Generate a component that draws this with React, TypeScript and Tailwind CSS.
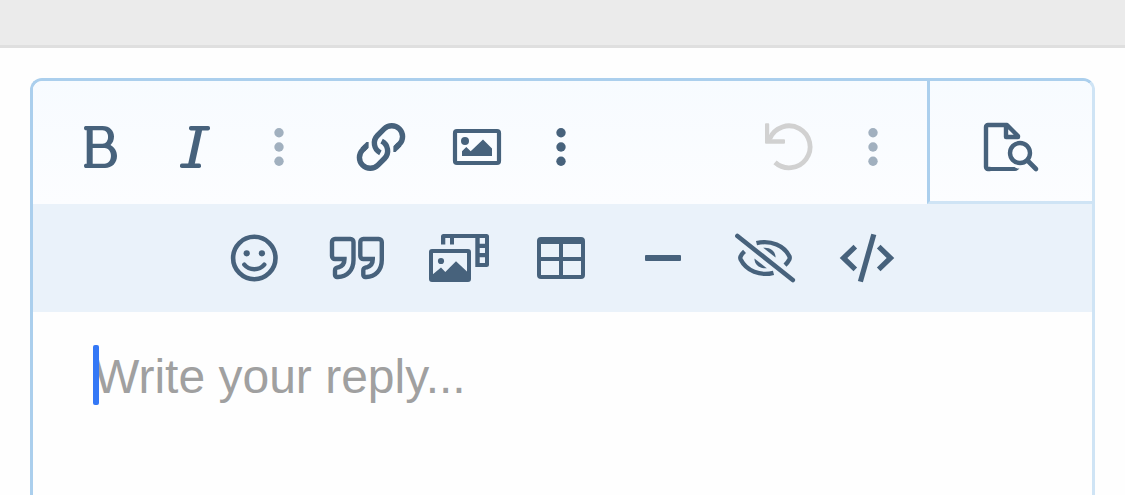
import type { ReactNode } from "react";

type GlyphProps = { children: ReactNode };

function Glyph({ children }: GlyphProps) {
  return (
    <svg viewBox="-36 -36 72 72" className="size-[72px] shrink-0" fill="currentColor" aria-hidden="true">
      {children}
    </svg>
  );
}

function Line({ d, width = 4, round = false }: { d: string; width?: number; round?: boolean }) {
  return (
    <path
      d={d}
      fill="none"
      stroke="currentColor"
      strokeWidth={width}
      strokeLinecap={round ? "round" : "butt"}
      strokeLinejoin={round ? "round" : "miter"}
    />
  );
}

const BoldIcon = () => (
  <Glyph>
    <path
      fillRule="evenodd"
      d="M-13.5 -21H3.5C11 -21 15 -16 15 -10.5C15 -6.8 13.7 -4 11.5 -2C15.5 0.3 18 4 18 9C18 16 13 21 6 21H-13.5C-15.5 21-15.5 16.8-13.5 16.8H-12.3V-16.8H-13.5C-15.5-16.8-15.5-21-13.5-21ZM-6.3-16.8V-3.3H3.5C11-3.3 11-16.8 3.5-16.8ZM-6.3 1V16.8H5.5C14.2 16.8 14.2 1 5.5 1Z"
    />
  </Glyph>
);

const ItalicIcon = () => (
  <Glyph>
    <rect x="-6" y="-21" width="21" height="4.4" rx="1.8" />
    <rect x="-15" y="16.6" width="21" height="4.4" rx="1.8" />
    <path d="M1-19H7.6L-.7 19H-7.3Z" />
  </Glyph>
);

const DotsIcon = () => (
  <Glyph>
    <circle cy="-14.3" r="4.7" />
    <circle r="4.7" />
    <circle cy="14.3" r="4.7" />
  </Glyph>
);

const LinkIcon = () => (
  <Glyph>
    <path d="M12.4-.8V4.9H14.6L20.3-.8L16.3-4.7Z" />
    <path d="M-12.4.8V-4.9H-14.6L-20.3.8L-16.3 4.7Z" />
    <Line width={5.4} d="M15 .6L18.4-2.8A10.8 10.8 0 0 0 3.1-18.1L-3.5-11.5A10.8 10.8 0 0 0-.6 5.8" />
    <Line width={5.4} d="M-15-.6L-18.4 2.8A10.8 10.8 0 0 0-3.1 18.1L3.5 11.5A10.8 10.8 0 0 0 .6-5.8" />
  </Glyph>
);

const ImageIcon = () => (
  <Glyph>
    <rect x="-22" y="-16" width="44" height="32" rx="2" fill="none" stroke="currentColor" strokeWidth="4.2" />
    <circle cx="-12" cy="-6" r="4" />
    <path d="M-15 9V4.3L-10.7 0L-6.3 4.3L6-7.5L15 1.5V9Z" />
  </Glyph>
);

const UndoIcon = () => (
  <Glyph>
    <Line width={4.8} d="M-14 15.4A21 21 0 1 0-19.2-8.5" />
    <path d="M-23-23.7h2.2a1 1 0 0 1 1 1V-12L-17.5-7.7H-5a1 1 0 0 1 1 1v2.4a1 1 0 0 1-1 1H-23a1 1 0 0 1-1-1V-22.7a1 1 0 0 1 1-1Z" />
  </Glyph>
);

const PreviewIcon = () => (
  <Glyph>
    <path d="M-24 20H3.5Q5.5 21.7 8.5 21.6Q6.5 24 4 24H-24Z" />
    <Line d="M-21 22H-23a2 2 0 0 1-2-2V-20a2 2 0 0 1 2-2H-4L7-11V-10H-5V-22" width={4.4} round />
    <circle cx="9" cy="6" r="10" fill="none" stroke="currentColor" strokeWidth="4.4" />
    <Line d="M16.5 13.5L25 22" width={4.6} round />
  </Glyph>
);

const SmileIcon = () => (
  <Glyph>
    <circle cx="-0.7" r="21.2" fill="none" stroke="currentColor" strokeWidth="4.6" />
    <circle cx="-8.3" cy="-4.7" r="3.1" />
    <circle cx="6.9" cy="-4.7" r="3.1" />
    <Line d="M-10.7 6.6C-5.5 12.8 4.1 12.8 9.3 6.6" width={4.4} round />
  </Glyph>
);

const QUOTE_PATH =
  "M-12.5 1H-22a3 3 0 0 1-3-3V-16a3 3 0 0 1 3-3H-6.5a3 3 0 0 1 3 3V2C-3.5 12-10 19-19 19H-20a2 2 0 0 1-2-2V12.5C-22 9.8-20.5 9.8-18.5 9.3C-14.5 8.3-12.5 6-12.5 1Z";

const QuoteIcon = () => (
  <Glyph>
    <Line d={QUOTE_PATH} width={4.4} />
    <g transform="translate(28.3 0)">
      <Line d={QUOTE_PATH} width={4.4} />
    </g>
  </Glyph>
);

const GalleryIcon = () => (
  <Glyph>
    <path
      fillRule="evenodd"
      d="M-18-13.5V-21.5A2.5 2.5 0 0 1-15.5-24H27.5A2.5 2.5 0 0 1 30-21.5V6.5A2.5 2.5 0 0 1 27.5 9H16.3V-20H-5V-13.5H-9V-20H-13.7V-13.5ZM20.7-20V-14.3H26V-20ZM20.7-10V-5H26V-10ZM20.7-.7V5H26V-.7Z"
    />
    <rect x="-28" y="-7" width="38" height="29" rx="1" fill="none" stroke="currentColor" strokeWidth="4" />
    <circle cx="-18" cy="3" r="3.1" />
    <path d="M-27 17L-18 9.5L-13.7 14L-3 3.3L9 14.5V22H-27Z" />
  </Glyph>
);

const TableIcon = () => (
  <Glyph>
    <path
      fillRule="evenodd"
      d="M-20-21H20A4 4 0 0 1 24-17V17A4 4 0 0 1 20 21H-20A4 4 0 0 1-24 17V-17A4 4 0 0 1-20-21ZM-20-14V-1H-2V-14ZM2-14V-1H20V-14ZM-20 3V17H-2V3ZM2 3V17H20V3Z"
    />
  </Glyph>
);

const RuleIcon = () => (
  <Glyph>
    <rect x="-18" y="-3" width="36" height="6" rx="1" />
  </Glyph>
);

const HiddenIcon = () => (
  <Glyph>
    <Line d="M-27.6-22L27.8 22" width={4.6} round />
    <Line d="M-8.5-14.8C6-18.5 19.5-12 24.5-1.5Q25 0 24.3 1.5Q22.5 5 20 7.2" width={4.4} />
    <Line d="M-20.5-6.7Q-23.5-4-24.5-1.3Q-25 0-24.3 1.5C-18.5 13-5 18.3 8.5 14.8" width={4.4} />
    <path d="M-1.8-10.2C5-11 10.5-7 10.6-.5Z" />
    <path d="M1.8 10.2C-5 11-10.5 7-10.6.5Z" />
  </Glyph>
);

const CodeIcon = () => (
  <Glyph>
    <Line d="M6.8-23.6L-6.6 23.6" width={5.2} />
    <Line d="M-11.7-11.3L-23.5 0L-11.7 11.3" width={5.2} />
    <Line d="M11.7-11.3L23.5 0L11.7 11.3" width={5.2} />
  </Glyph>
);

type ToolProps = { label: string; narrow?: boolean; muted?: boolean; disabled?: boolean; children: ReactNode };

function Tool({ label, narrow, muted, disabled, children }: ToolProps) {
  const width = narrow ? "w-[72px]" : "w-[96px]";
  const color = disabled ? "text-[#d1d1d1]" : muted ? "text-[#a1b0bf]" : "text-[#47627c]";
  return (
    <button
      type="button"
      aria-label={label}
      title={label}
      disabled={disabled}
      className={`flex h-[96px] shrink-0 items-center justify-center ${width} ${color}`}
    >
      {children}
    </button>
  );
}

const insertTools = [
  { label: "Smilies", Icon: SmileIcon },
  { label: "Quote", Icon: QuoteIcon },
  { label: "Media", Icon: GalleryIcon },
  { label: "Insert table", Icon: TableIcon },
  { label: "Insert horizontal line", Icon: RuleIcon },
  { label: "Spoiler", Icon: HiddenIcon },
  { label: "Code", Icon: CodeIcon },
];

export default function App() {
  return (
    <div className="flex min-h-screen flex-col bg-[#fefefe] font-['Liberation_Sans',Arial,sans-serif]">
      <header className="h-12 shrink-0 border-b-[3px] border-[#dfdfdf] bg-[#ebebeb]" />
      <main className="flex flex-1 flex-col px-[30px] pt-[30px]">
        <section
          aria-label="Reply editor"
          className="flex flex-1 flex-col overflow-hidden rounded-t-xl border-x-[3px] border-t-[3px] border-t-[#abcfed] border-r-[#cfe4f5] border-l-[#abcfed]"
        >
          <div
            role="toolbar"
            aria-label="Formatting"
            className="flex h-[123px] shrink-0 bg-linear-to-b from-[#f7fbff] to-[#fcfdff]"
          >
            <div className="flex flex-1 items-center gap-[18px] px-[18px] pt-[9px]">
              <div className="flex">
                <Tool label="Bold"><BoldIcon /></Tool>
                <Tool label="Italic"><ItalicIcon /></Tool>
                <Tool label="More text options" narrow muted><DotsIcon /></Tool>
              </div>
              <div className="flex">
                <Tool label="Insert link"><LinkIcon /></Tool>
                <Tool label="Insert image"><ImageIcon /></Tool>
                <Tool label="More rich options" narrow><DotsIcon /></Tool>
              </div>
              <div className="ml-auto flex">
                <Tool label="Undo" disabled><UndoIcon /></Tool>
                <Tool label="More options" narrow muted><DotsIcon /></Tool>
              </div>
            </div>
            <button
              type="button"
              aria-label="Preview"
              title="Preview"
              className="flex w-[165px] shrink-0 items-center justify-center border-b-[3px] border-l-[3px] border-b-[#cfe4f5] border-l-[#abcfed] pt-3 text-[#47627c]"
            >
              <PreviewIcon />
            </button>
          </div>
          <div
            role="toolbar"
            aria-label="Insert"
            className="flex h-[108px] shrink-0 items-center justify-center gap-[6px] bg-[#eaf2fa] pr-[3px]"
          >
            {insertTools.map(({ label, Icon }) => (
              <Tool key={label} label={label}><Icon /></Tool>
            ))}
          </div>
          <div className="relative flex flex-1">
            <textarea
              aria-label="Your reply"
              placeholder="Write your reply..."
              className="flex-1 resize-none overflow-hidden bg-transparent px-[61px] pt-[35px] text-5xl leading-[60px] text-[#333333] caret-[#3478f6] outline-none placeholder:text-[#a0a0a0]"
            />
            <span className="pointer-events-none absolute top-[33px] left-[60px] h-[60px] w-[6px] rounded-[2px] bg-[#3478f6]" />
          </div>
        </section>
      </main>
    </div>
  );
}
